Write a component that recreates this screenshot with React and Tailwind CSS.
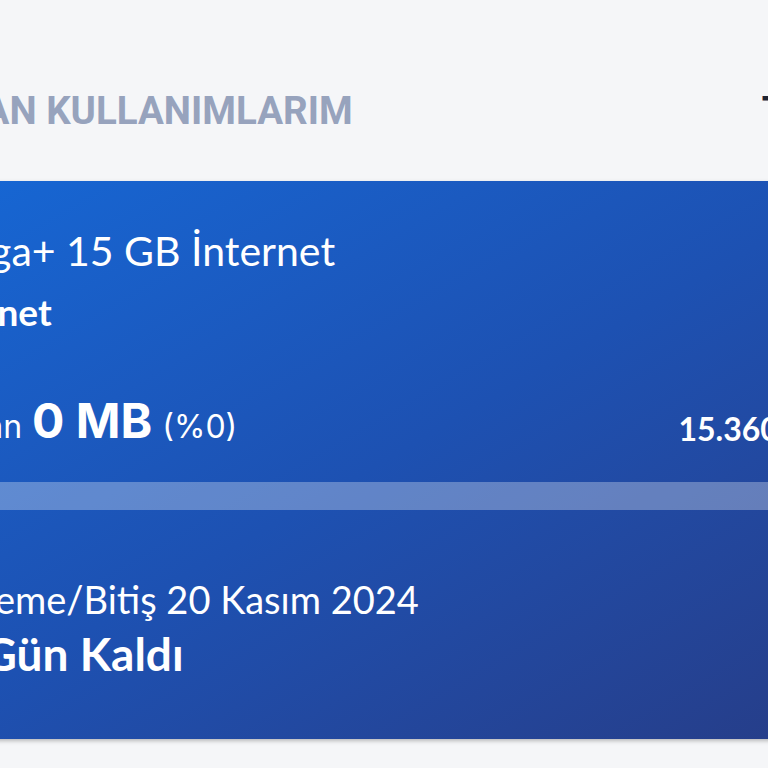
export default function App() {
  return (
    <div className="h-[768px] w-[768px] overflow-hidden bg-[#f5f6f8]">
      <div className="ml-[-100px] w-[968px]">
        <div className="flex h-[181px] items-start pt-[88px]">
          <h2 className="pl-[12px] font-['Roboto',sans-serif] text-[38.5px] font-bold leading-[46px] text-[#97a3bd]">
            KALAN KULLANIMLARIM
          </h2>
          <span className="ml-auto mr-[6px] font-['Roboto',sans-serif] text-[39px] font-bold leading-[46px] text-[#1d2433]">
            Tümü
          </span>
        </div>

        <div className="h-[558px] bg-gradient-to-br from-[#1568d6] via-[#1d51b2] to-[#263c86] pt-[46px] shadow-[0_2px_4px_rgba(0,0,0,0.25)]">
          <div className="font-['Lato',sans-serif] text-white">
            <p className="pl-[31px] text-[41px] leading-[48px]">Mega+ 15 GB İnternet</p>
            <p className="mt-[16px] pl-[19px] text-[37px] font-bold leading-[42px]">İnternet</p>

            <div className="mt-[60px] flex items-end justify-between pl-[38px] pr-[30px]">
              <p className="flex items-baseline gap-[10px] font-['Inter',sans-serif]">
                <span className="text-[32px] leading-[56px]">Kalan</span>
                <span className="text-[48px] font-bold leading-[56px]">0 MB</span>
                <span className="text-[32px] leading-[56px]">(%0)</span>
              </p>
              <p className="text-[32px] font-bold leading-[52px]">15.360 MB</p>
            </div>

            <div className="mt-[27px] h-[28px] w-full bg-white/30" />

            <p className="mt-[67px] pl-[16px] text-[38px] leading-[44px]">Yenileme/Bitiş 20 Kasım 2024</p>
            <p className="mt-[6px] pl-[19px] text-[46px] font-bold leading-[54px]">12 Gün Kaldı</p>
          </div>
        </div>
      </div>
    </div>
  );
}
